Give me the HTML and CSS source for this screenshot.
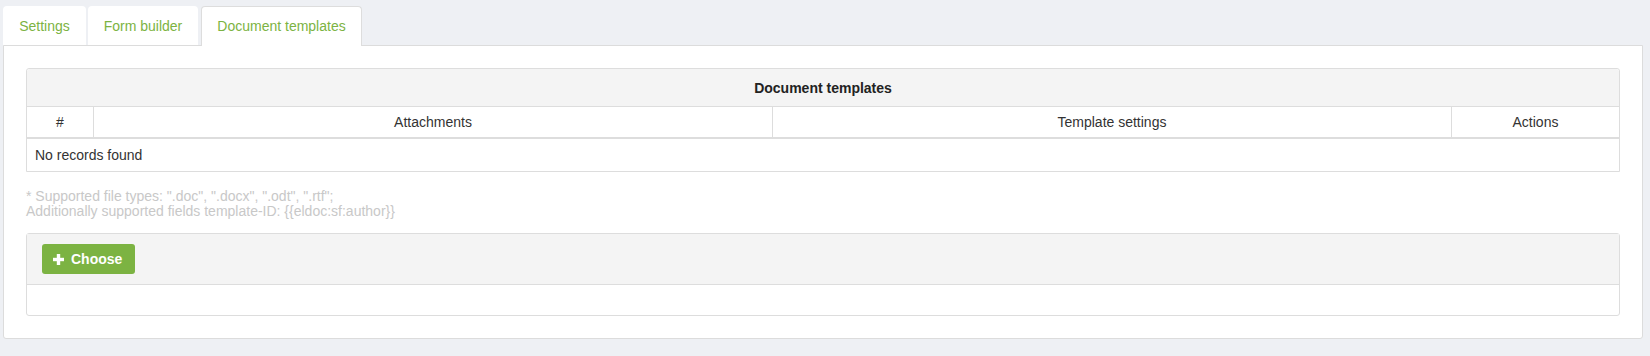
FILE: index.html
```html
<!DOCTYPE html>
<html>
<head>
<meta charset="utf-8">
<link rel="stylesheet" href="styles.css">
</head>
<body>
<div class="tabs">
  <div class="tab">Settings</div>
  <div class="tab">Form builder</div>
  <div class="tab active">Document templates</div>
</div>
<div class="panel">
  <table class="grid">
    <colgroup>
      <col class="c-num"><col><col><col class="c-act">
    </colgroup>
    <thead>
      <tr class="title-row"><th colspan="4">Document templates</th></tr>
      <tr class="head-row"><th>#</th><th>Attachments</th><th>Template settings</th><th>Actions</th></tr>
    </thead>
    <tbody>
      <tr class="empty-row"><td colspan="4">No records found</td></tr>
    </tbody>
  </table>
  <div class="hint">
    <div>* Supported file types: ".doc", ".docx", ".odt", ".rtf";</div>
    <div>Additionally supported fields template-ID: {{eldoc:sf:author}}</div>
  </div>
  <div class="upload">
    <div class="upload-head">
      <button class="btn">
        <svg width="11" height="11" viewBox="0 0 11 11"><rect x="3.8" y="0" width="3.4" height="11" fill="#fff"/><rect x="0" y="3.8" width="11" height="3.4" fill="#fff"/></svg>
        <span>Choose</span>
      </button>
    </div>
    <div class="upload-body"></div>
  </div>
</div>
</body>
</html>
```
FILE: styles.css
```css
html, body {
  margin: 0;
  padding: 0;
}
body {
  background: #eef0f4;
  font-family: "Liberation Sans", Arial, sans-serif;
  font-size: 14px;
  color: #333;
  width: 1650px;
  height: 356px;
  overflow: hidden;
}
.tabs {
  display: flex;
  gap: 2px;
  padding: 6px 0 0 3px;
  height: 39px;
  box-sizing: content-box;
  position: relative;
  z-index: 2;
}
.tab {
  height: 39px;
  box-sizing: border-box;
  padding: 0;
  background: #fff;
  border-radius: 4px 4px 0 0;
  color: #7cb342;
  line-height: 40px;
  font-size: 14px;
  text-align: center;
}
.tab:nth-child(1) { width: 83px; }
.tab:nth-child(2) { width: 110px; }
.tab.active {
  width: 161px;
  margin-left: 1px;
  border: 1px solid #ddd;
  border-bottom: none;
  height: 40px;
  line-height: 39px;
}
.panel {
  margin: 0 7px 0 3px;
  background: #fff;
  border: 1px solid #dcdcdc;
  border-radius: 0 0 3px 3px;
  padding: 22px;
  height: 294px;
  box-sizing: border-box;
}
.grid {
  width: 100%;
  border-collapse: separate;
  border-spacing: 0;
  table-layout: fixed;
  border: 1px solid #ddd;
  border-radius: 3px 3px 0 0;
}
.c-num { width: 67px; }
.c-act { width: 167px; }
.title-row th {
  background: #f4f4f4;
  height: 37px;
  font-size: 14px;
  font-weight: bold;
  color: #222;
  border-bottom: 1px solid #ddd;
  padding: 0;
  border-radius: 3px 3px 0 0;
}
.head-row th {
  font-weight: normal;
  font-size: 14px;
  height: 30px;
  padding: 0;
  border-bottom: 2px solid #ddd;
  border-right: 1px solid #ddd;
}
.head-row th:last-child { border-right: none; }
.empty-row td {
  height: 32px;
  padding: 0 0 0 8px;
  font-size: 14px;
}
.hint {
  margin-top: 17px;
  color: #c8c8c8;
  font-size: 14px;
  line-height: 15px;
}
.upload {
  margin-top: 14px;
  border: 1px solid #ddd;
  border-radius: 3px;
}
.upload-head {
  background: #f4f4f4;
  padding: 10px 15px;
  border-bottom: 1px solid #ddd;
  display: flex;
}
.btn {
  display: flex;
  align-items: center;
  gap: 7px;
  height: 30px;
  width: 93px;
  padding: 0 0 0 11px;
  border: none;
  border-radius: 3px;
  background: #7cb342;
  color: #fff;
  font-family: "Liberation Sans", Arial, sans-serif;
  font-size: 14px;
  font-weight: bold;
}
.upload-body {
  height: 30px;
}
```
